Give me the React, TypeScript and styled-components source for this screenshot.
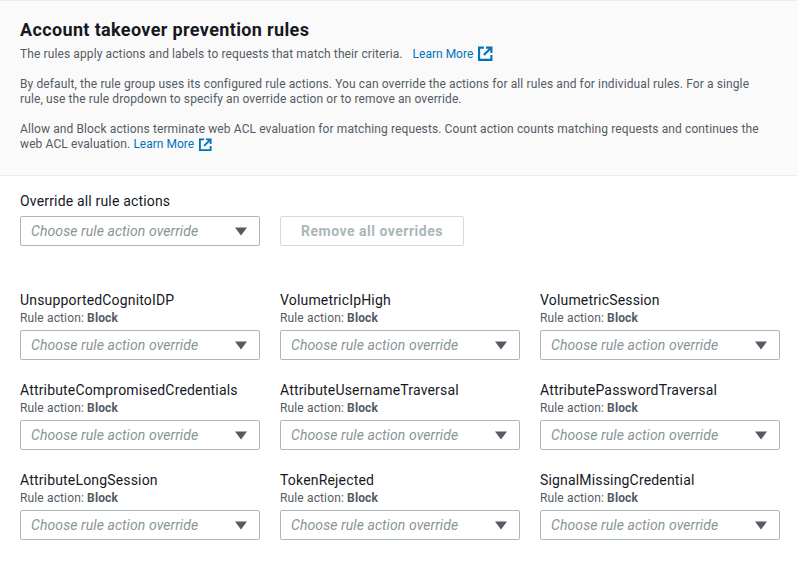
import React from 'react';
import styled, { createGlobalStyle } from 'styled-components';

const GlobalStyle = createGlobalStyle`
  html, body {
    margin: 0;
    padding: 0;
    background: #fff;
    font-family: Roboto, "Noto Sans", sans-serif;
  }
`;

const Page = styled.div`
  width: 798px;
  height: 580px;
  overflow: hidden;
  color: #16191f;
`;

const Header = styled.header`
  height: 176px;
  box-sizing: border-box;
  padding: 17px 20px 0;
  background: #fafafa;
  border-top: 1px solid #eaeded;
  border-bottom: 1px solid #eaeded;
`;

const Title = styled.h2`
  margin: 0;
  font-size: 18px;
  line-height: 24px;
  font-weight: 700;
  letter-spacing: 0.36px;
`;

const Description = styled.p`
  max-width: 745px;
  margin: 0 0 15px;
  font-size: 12px;
  line-height: 15px;
  letter-spacing: 0.11px;
  color: #545b64;
`;

const Intro = styled(Description)`
  margin-top: 4px;
  margin-bottom: 15px;
`;

const LearnMore = styled.a<{ $gap?: number }>`
  color: #0073bb;
  margin-left: ${(p) => p.$gap ?? 0}px;
  letter-spacing: 0;
  white-space: nowrap;
`;

const LinkIcon = styled.svg`
  vertical-align: -3px;
  margin-left: 5px;
`;

const Content = styled.main`
  padding: 16px 20px 0;
`;

const FieldLabel = styled.div`
  font-size: 14px;
  line-height: 18px;
  letter-spacing: 0.17px;
`;

const OverrideRow = styled.div`
  display: flex;
  gap: 20px;
  margin-top: 6px;
  margin-bottom: 45px;
`;

const Select = styled.div`
  width: 240px;
  height: 30px;
  box-sizing: border-box;
  display: flex;
  align-items: center;
  justify-content: space-between;
  padding: 0 12px 0 10px;
  background: #fff;
  border: 1px solid #aab7b8;
  border-radius: 2px;
`;

const Placeholder = styled.span`
  font-size: 14px;
  font-style: italic;
  letter-spacing: 0.08px;
  color: #879596;
`;

const RemoveButton = styled.button`
  width: 184px;
  height: 30px;
  padding: 0;
  background: #fff;
  border: 1px solid #d5dbdb;
  border-radius: 2px;
  font-family: inherit;
  font-size: 14px;
  font-weight: 700;
  letter-spacing: 0.5px;
  color: #aab7b8;
`;

const RuleGrid = styled.div`
  display: grid;
  grid-template-columns: repeat(3, 240px);
  column-gap: 20px;
  row-gap: 21px;
`;

const Rule = styled.div`
  display: flex;
  flex-direction: column;
`;

const RuleAction = styled.div`
  font-size: 12px;
  line-height: 15px;
  letter-spacing: 0.14px;
  color: #545b64;
  margin-top: 2px;
  margin-bottom: 4px;
  b {
    font-weight: 700;
  }
`;

const ExternalIcon = ({ size }: { size: number }) => (
  <LinkIcon width={size} height={size} viewBox="0 0 14 14" fill="none" stroke="#0073bb" strokeWidth="2">
    <path d="M5.500 1.500H1V13H12.500V8.500" />
    <path d="M7.500 1.500H12.500V6.500" />
    <path d="M12.500 1.500L5.500 8.500" />
  </LinkIcon>
);

const Caret = () => (
  <svg width="12" height="9" viewBox="0 0 12 9">
    <path d="M0 0.500h12L6 8.500z" fill="#545b64" />
  </svg>
);

const OverrideSelect = () => (
  <Select>
    <Placeholder>Choose rule action override</Placeholder>
    <Caret />
  </Select>
);

const rules = [
  'UnsupportedCognitoIDP',
  'VolumetricIpHigh',
  'VolumetricSession',
  'AttributeCompromisedCredentials',
  'AttributeUsernameTraversal',
  'AttributePasswordTraversal',
  'AttributeLongSession',
  'TokenRejected',
  'SignalMissingCredential',
];

export default function App() {
  return (
    <Page>
      <GlobalStyle />
      <Header>
        <Title>Account takeover prevention rules</Title>
        <Intro>
          The rules apply actions and labels to requests that match their criteria.
          <LearnMore $gap={10}>
            Learn More
            <ExternalIcon size={15} />
          </LearnMore>
        </Intro>
        <Description>
          By default, the rule group uses its configured rule actions. You can override the actions for all rules and
          for individual rules. For a single rule, use the rule dropdown to specify an override action or to remove an
          override.
        </Description>
        <Description>
          Allow and Block actions terminate web ACL evaluation for matching requests. Count action counts matching
          requests and continues the web ACL evaluation.{' '}
          <LearnMore>
            Learn More
            <ExternalIcon size={13} />
          </LearnMore>
        </Description>
      </Header>
      <Content>
        <FieldLabel>Override all rule actions</FieldLabel>
        <OverrideRow>
          <OverrideSelect />
          <RemoveButton>Remove all overrides</RemoveButton>
        </OverrideRow>
        <RuleGrid>
          {rules.map((name) => (
            <Rule key={name}>
              <FieldLabel>{name}</FieldLabel>
              <RuleAction>
                Rule action: <b>Block</b>
              </RuleAction>
              <OverrideSelect />
            </Rule>
          ))}
        </RuleGrid>
      </Content>
    </Page>
  );
}
